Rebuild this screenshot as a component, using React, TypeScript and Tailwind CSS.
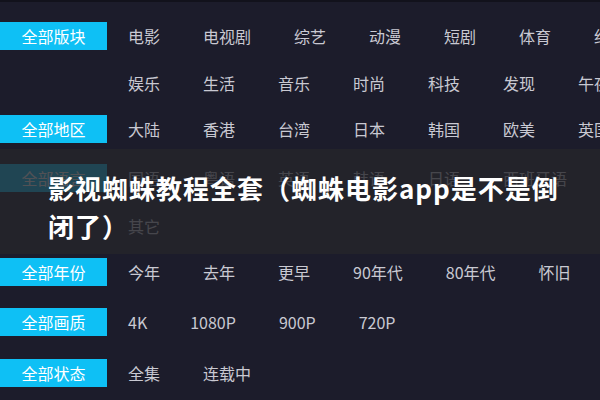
const rows = [
  { label: "全部版块", items: ["电影", "电视剧", "综艺", "动漫", "短剧", "体育", "纪录片"], top: "mt-[22px]" },
  { label: "", items: ["娱乐", "生活", "音乐", "时尚", "科技", "发现", "午夜"], top: "mt-[19px]" },
  { label: "全部地区", items: ["大陆", "香港", "台湾", "日本", "韩国", "欧美", "英国"], top: "mt-[18px]" },
  { label: "全部语言", items: ["国语", "粤语", "英语", "韩语", "日语", "西班牙语"], top: "mt-[21px]" },
  { label: "", items: ["其它"], top: "mt-[20px]" },
  { label: "全部年份", items: ["今年", "去年", "更早", "90年代", "80年代", "怀旧"], top: "mt-[18px]" },
  { label: "全部画质", items: ["4K", "1080P", "900P", "720P"], top: "mt-[22px]" },
  { label: "全部状态", items: ["全集", "连载中"], top: "mt-[23px]" },
];

export default function App() {
  return (
    <div
      className="relative w-[600px] h-[400px] overflow-hidden bg-[#1c1c2b] border-t-2 border-[#12121c]"
      style={{ fontFamily: '"Noto Sans CJK SC", "Noto Sans", sans-serif' }}
    >
      <div className="flex flex-col -mt-[2px]">
        {rows.map((row, i) => (
          <div key={i} className={`flex items-center h-[28px] whitespace-nowrap ${row.top}`}>
            <div
              className={`w-[107px] h-[28px] shrink-0 flex items-center justify-center text-[16px] text-white ${
                row.label ? "bg-[#0ec0f5]" : ""
              }`}
            >
              {row.label}
            </div>
            <div className="flex gap-[43px] ml-[21px] text-[16px] text-[#c9c9d2]">
              {row.items.map((item) => (
                <span key={item}>{item}</span>
              ))}
            </div>
          </div>
        ))}
      </div>

      {/* title banner over the filter list */}
      <div className="absolute left-0 right-0 top-[147px] h-[105px] bg-[rgba(38,38,42,0.8)] pl-[48px] pr-[20px] pt-[20px]">
        <h1 className="text-[26px] leading-[38px] font-bold tracking-[1px] text-white">
          影视蜘蛛教程全套（蜘蛛电影app是不是倒闭了）
        </h1>
      </div>
    </div>
  );
}
